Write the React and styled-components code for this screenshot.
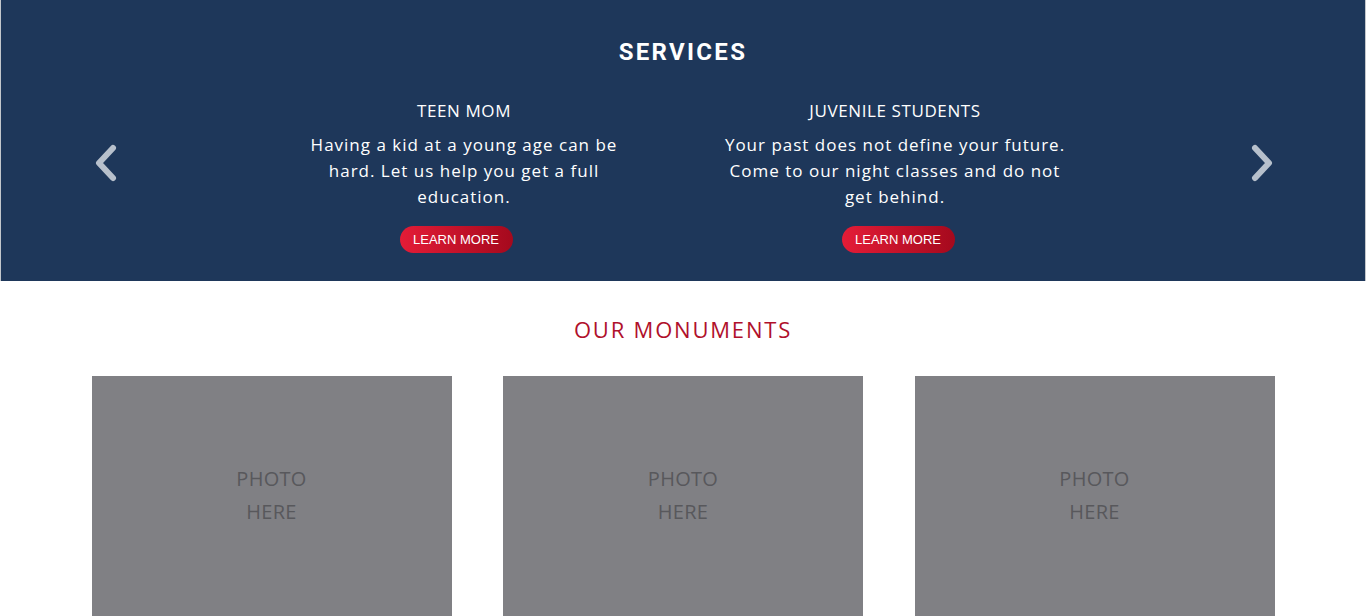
import React from "react";
import styled, { createGlobalStyle } from "styled-components";

const GlobalStyle = createGlobalStyle`
  body {
    margin: 0;
    background: #fff;
    font-family: "Open Sans", "Liberation Sans", sans-serif;
  }
`;

const Banner = styled.section`
  background: #1e375a;
  border-left: 1px solid #c3c7cc;
  border-right: 1px solid #c3c7cc;
  height: 281px;
  box-sizing: border-box;
  padding-top: 38px;
  display: flex;
  flex-direction: column;
  align-items: center;
`;

const BannerTitle = styled.h2`
  margin: 0;
  font-family: Roboto, "Liberation Sans", sans-serif;
  font-weight: 700;
  font-size: 24px;
  line-height: 28px;
  letter-spacing: 2.3px;
  color: #fff;
`;

const Slider = styled.div`
  align-self: stretch;
  display: flex;
  align-items: flex-start;
  justify-content: space-between;
  padding: 0 88px 0 90px;
  margin-top: 34px;
`;

const Arrow = styled.button`
  background: none;
  border: none;
  padding: 0;
  width: 30px;
  height: 40px;
  margin-top: 43px;
  display: flex;
  align-items: center;
  justify-content: center;
  cursor: pointer;
`;

const Slides = styled.div`
  display: flex;
  gap: 86px;
  margin-left: -9px;
`;

const Slide = styled.div`
  width: 345px;
  display: flex;
  flex-direction: column;
  align-items: center;
  text-align: center;
  color: #fff;
`;

const SlideTitle = styled.h3`
  margin: 0;
  font-weight: 400;
  font-size: 17px;
  line-height: 22px;
  letter-spacing: 0.6px;
`;

const SlideText = styled.p`
  margin: 10px 0 0;
  font-size: 17px;
  line-height: 26px;
  letter-spacing: 1px;
`;

const LearnMore = styled.button`
  margin-top: 16px;
  margin-left: ${(p) => p.$shift || 0}px;
  width: 113px;
  height: 27px;
  border: none;
  border-radius: 14px;
  background: linear-gradient(90deg, #e41c37 0%, #a5091d 100%);
  color: #fff;
  font-family: "Liberation Sans", Arial, sans-serif;
  font-size: 13px;
  padding: 0;
  cursor: pointer;
`;

const Monuments = styled.section`
  display: flex;
  flex-direction: column;
  align-items: center;
  padding-top: 34px;
`;

const SectionTitle = styled.h2`
  margin: 0;
  font-weight: 400;
  font-size: 22px;
  line-height: 28px;
  letter-spacing: 1.8px;
  color: #b0102b;
`;

const Gallery = styled.div`
  margin-top: 33px;
  display: grid;
  grid-template-columns: repeat(3, 360px);
  column-gap: 51.5px;
`;

const Photo = styled.div`
  height: 280px;
  background: #808084;
  box-sizing: border-box;
  padding-top: 86px;
  text-align: center;
  color: #58585c;
  font-size: 20px;
  line-height: 33px;
  letter-spacing: 0.3px;
`;

const Chevron = ({ dir }) => (
  <svg width="26" height="40" viewBox="0 0 26 40">
    <path
      d={dir === "left" ? "M20 5 L6 20 L20 35" : "M6 5 L20 20 L6 35"}
      fill="none"
      stroke="#b7c0cc"
      strokeWidth="6"
      strokeLinecap="round"
      strokeLinejoin="round"
    />
  </svg>
);

const services = [
  {
    title: "TEEN MOM",
    text: "Having a kid at a young age can be hard. Let us help you get a full education.",
    shift: -16,
  },
  {
    title: "JUVENILE STUDENTS",
    text: "Your past does not define your future. Come to our night classes and do not get behind.",
    shift: 6,
  },
];

export default function App() {
  return (
    <>
      <GlobalStyle />
      <Banner>
        <BannerTitle>SERVICES</BannerTitle>
        <Slider>
          <Arrow aria-label="previous">
            <Chevron dir="left" />
          </Arrow>
          <Slides>
            {services.map((s) => (
              <Slide key={s.title}>
                <SlideTitle>{s.title}</SlideTitle>
                <SlideText>{s.text}</SlideText>
                <LearnMore $shift={s.shift}>LEARN MORE</LearnMore>
              </Slide>
            ))}
          </Slides>
          <Arrow aria-label="next">
            <Chevron dir="right" />
          </Arrow>
        </Slider>
      </Banner>
      <Monuments>
        <SectionTitle>OUR MONUMENTS</SectionTitle>
        <Gallery>
          {[1, 2, 3].map((n) => (
            <Photo key={n}>
              PHOTO
              <br />
              HERE
            </Photo>
          ))}
        </Gallery>
      </Monuments>
    </>
  );
}
